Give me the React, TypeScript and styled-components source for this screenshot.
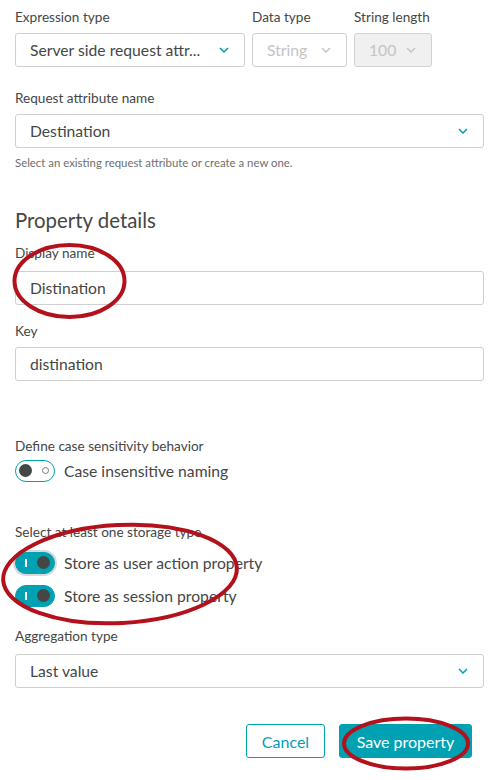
import React from 'react';
import styled, { createGlobalStyle } from 'styled-components';

const GlobalStyle = createGlobalStyle`
    html, body {
        margin: 0;
        padding: 0;
        background: #ffffff;
    }
    body {
        font-family: Lato, "Open Sans", sans-serif;
        color: #454646;
    }
`;

const Page = styled.div`
    position: relative;
    width: 502px;
    height: 780px;
    padding: 9px 18px 0 15px;
    box-sizing: border-box;
    overflow: hidden;
`;

const Row = styled.div`
    display: flex;
    gap: 7px;
`;

const Field = styled.div<{ $mt?: number; $width?: number }>`
    display: flex;
    flex-direction: column;
    margin-top: ${(p) => p.$mt ?? 0}px;
    width: ${(p) => (p.$width ? `${p.$width}px` : 'auto')};
    flex: ${(p) => (p.$width ? 'none' : '1')};
`;

const Label = styled.label<{ $mb?: number }>`
    font-size: 13.6px;
    line-height: 16px;
    margin-bottom: ${(p) => p.$mb ?? 8}px;
    color: #454646;
`;

const SelectBox = styled.div<{ $variant?: 'default' | 'muted' | 'disabled' }>`
    height: 34px;
    box-sizing: border-box;
    border: 1px solid ${(p) => (p.$variant === 'disabled' ? '#d2d2d2' : '#cfcfcf')};
    border-radius: 3px;
    background: ${(p) => (p.$variant === 'disabled' ? '#f0f0f0' : '#ffffff')};
    display: flex;
    align-items: center;
    justify-content: space-between;
    padding: 0 15px 0 14px;
    font-size: 15.7px;
    color: ${(p) => (p.$variant === 'default' || !p.$variant ? '#454646' : '#c4c4c4')};
    white-space: nowrap;
`;

const TextInput = styled.div`
    height: 34px;
    box-sizing: border-box;
    border: 1px solid #cfcfcf;
    border-radius: 3px;
    display: flex;
    align-items: center;
    padding: 0 14px;
    font-size: 15.7px;
    color: #454646;
`;

const HelpText = styled.div`
    margin-top: 8px;
    font-size: 11.4px;
    line-height: 14px;
    color: #6f6f6f;
`;

const Heading = styled.h2`
    margin: 38px 0 13px;
    font-size: 20.4px;
    line-height: 24px;
    font-weight: 400;
    color: #454646;
`;

const ToggleRow = styled.div<{ $mt: number }>`
    display: flex;
    align-items: center;
    gap: 9px;
    margin-top: ${(p) => p.$mt}px;
    font-size: 15.7px;
    line-height: 22px;
`;

const Toggle = styled.span<{ $on?: boolean; $focus?: boolean }>`
    position: relative;
    width: 40px;
    height: 22px;
    box-sizing: border-box;
    border-radius: 11px;
    border: 1.5px solid #00a1b2;
    background: ${(p) => (p.$on ? '#00a1b2' : '#ffffff')};
    box-shadow: ${(p) => (p.$focus ? '0 0 0 2px #d9d9d9' : 'none')};
    flex: none;
`;

const Knob = styled.span<{ $on?: boolean }>`
    position: absolute;
    top: 3px;
    left: ${(p) => (p.$on ? '21px' : '3px')};
    width: 13px;
    height: 13px;
    border-radius: 50%;
    background: #454646;
`;

const OffMark = styled.span`
    position: absolute;
    top: 6px;
    right: 5px;
    width: 5px;
    height: 5px;
    border-radius: 50%;
    border: 1.5px solid #7a7a7a;
`;

const OnMark = styled.span`
    position: absolute;
    top: 6px;
    left: 9px;
    width: 1.5px;
    height: 8px;
    background: #ffffff;
`;

const ButtonBar = styled.div`
    display: flex;
    justify-content: flex-end;
    gap: 14px;
    margin-top: 36px;
    padding-right: 12px;
`;

const Button = styled.button<{ $primary?: boolean }>`
    height: 34px;
    box-sizing: border-box;
    border-radius: 3px;
    border: 1px solid #00a1b2;
    background: ${(p) => (p.$primary ? '#00a1b2' : '#ffffff')};
    color: ${(p) => (p.$primary ? '#ffffff' : '#00a1b2')};
    font-family: Lato, "Open Sans", sans-serif;
    font-size: 16px;
    padding: 0;
    width: ${(p) => (p.$primary ? '133px' : '79px')};
    cursor: pointer;
`;

const Annotations = styled.svg`
    position: absolute;
    left: 0;
    top: 0;
    width: 502px;
    height: 780px;
    pointer-events: none;
`;

const Chevron = ({ color = '#00a1b2' }: { color?: string }) => (
    <svg width="10" height="6" viewBox="0 0 10 6">
        <polyline points="1,1 5,5 9,1" fill="none" stroke={color} strokeWidth="1.5" />
    </svg>
);

const App: React.FC = () => {
    return (
        <>
            <GlobalStyle />
            <Page>
                <Row>
                    <Field $width={230}>
                        <Label>Expression type</Label>
                        <SelectBox>
                            <span>Server side request attr...</span>
                            <Chevron />
                        </SelectBox>
                    </Field>
                    <Field $width={95}>
                        <Label>Data type</Label>
                        <SelectBox $variant="muted">
                            <span>String</span>
                            <Chevron color="#c4c4c4" />
                        </SelectBox>
                    </Field>
                    <Field $width={78}>
                        <Label>String length</Label>
                        <SelectBox $variant="disabled">
                            <span>100</span>
                            <Chevron color="#c4c4c4" />
                        </SelectBox>
                    </Field>
                </Row>

                <Field $mt={23}>
                    <Label>Request attribute name</Label>
                    <SelectBox>
                        <span>Destination</span>
                        <Chevron />
                    </SelectBox>
                </Field>
                <HelpText>Select an existing request attribute or create a new one.</HelpText>

                <Heading>Property details</Heading>

                <Field>
                    <Label $mb={10}>Display name</Label>
                    <TextInput>Distination</TextInput>
                </Field>
                <Field $mt={18}>
                    <Label>Key</Label>
                    <TextInput>distination</TextInput>
                </Field>

                <Field $mt={57}>
                    <Label $mb={6}>Define case sensitivity behavior</Label>
                </Field>
                <ToggleRow $mt={0}>
                    <Toggle>
                        <Knob />
                        <OffMark />
                    </Toggle>
                    Case insensitive naming
                </ToggleRow>

                <Field $mt={42}>
                    <Label $mb={12}>Select at least one storage type</Label>
                </Field>
                <ToggleRow $mt={0}>
                    <Toggle $on $focus>
                        <OnMark />
                        <Knob $on />
                    </Toggle>
                    Store as user action property
                </ToggleRow>
                <ToggleRow $mt={11}>
                    <Toggle $on>
                        <OnMark />
                        <Knob $on />
                    </Toggle>
                    Store as session property
                </ToggleRow>

                <Field $mt={21}>
                    <Label $mb={10}>Aggregation type</Label>
                    <SelectBox>
                        <span>Last value</span>
                        <Chevron />
                    </SelectBox>
                </Field>

                <ButtonBar>
                    <Button>Cancel</Button>
                    <Button $primary>Save property</Button>
                </ButtonBar>

                <Annotations viewBox="0 0 502 780">
                    <g fill="none" stroke="#b3111b" strokeWidth="4">
                        <ellipse cx="69.5" cy="281" rx="55" ry="36" />
                        <ellipse cx="120" cy="574" rx="117" ry="49" transform="rotate(-3 120 574)" />
                        <ellipse cx="406" cy="743.5" rx="62" ry="25" />
                    </g>
                </Annotations>
            </Page>
        </>
    );
};

export default App;
